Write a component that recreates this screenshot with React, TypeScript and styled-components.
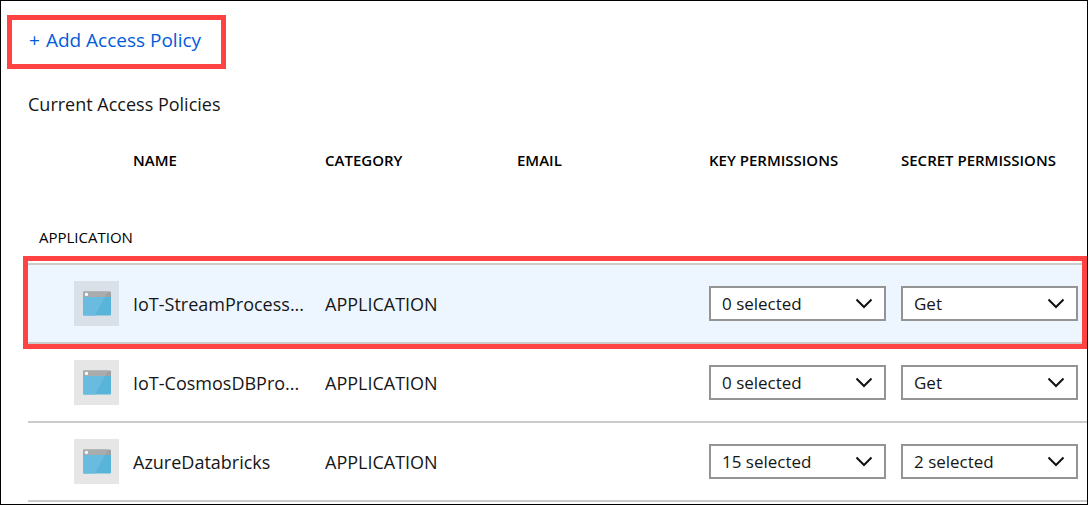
import React from "react";
import styled, { createGlobalStyle } from "styled-components";

const GlobalStyle = createGlobalStyle`
  * { box-sizing: border-box; }
  body {
    margin: 0;
    background: #fff;
    color: #161616;
    font-family: "Open Sans", "Noto Sans", "Liberation Sans", sans-serif;
  }
`;

const Page = styled.main`
  min-height: 100vh;
  border: 1px solid #000;
  padding-top: 14px;
  overflow: hidden;
`;

const Callout = styled.div`
  width: fit-content;
  margin-left: 6px;
  border: 5px solid #ff4343;
  padding: 8px 20px 12px 17px;
`;

const AddButton = styled.button`
  display: flex;
  gap: 6px;
  border: 0;
  padding: 0;
  background: none;
  color: #015cda;
  font: inherit;
  font-size: 19px;
  line-height: 24px;
  cursor: pointer;
`;

const Section = styled.section`
  margin-left: 27px;
`;

const Title = styled.h2`
  margin: 22px 0 0;
  font-size: 18px;
  font-weight: 400;
  line-height: 26px;
`;

const Table = styled.table`
  width: 100%;
  table-layout: fixed;
  border-collapse: separate;
  border-spacing: 0;
`;

const IconCol = styled.col`
  width: 105px;
`;

const LastCol = styled.col`
  width: 186px;
`;

const HeadCell = styled.th`
  height: 86px;
  padding: 0;
  text-align: left;
  white-space: nowrap;
  font-size: 15px;
  font-weight: 600;
  line-height: 20px;
  color: #000;
`;

const GroupCell = styled.th`
  height: 60px;
  padding: 8px 0 0 11px;
  text-align: left;
  font-size: 15px;
  font-weight: 400;
  line-height: 20px;
  color: #000;
`;

const Cell = styled.td`
  height: 79px;
  padding: 0;
  border-top: 2px solid #cbcbcb;
  vertical-align: middle;
`;

const Row = styled.tr<{ $active?: boolean }>`
  position: relative;
  background: ${(p) => (p.$active ? "#edf6ff" : "#fff")};
`;

const RowFrame = styled.span`
  position: absolute;
  inset: -7px 0 -7px -5px;
  border: 5px solid #ff4343;
  pointer-events: none;
  z-index: 1;
`;

const EndLine = styled.td`
  height: 2px;
  padding: 0;
  background: #cbcbcb;
`;

const Tile = styled.div<{ $active?: boolean }>`
  display: flex;
  align-items: center;
  justify-content: center;
  width: 45px;
  height: 45px;
  margin-left: 46px;
  background: ${(p) => (p.$active ? "#d9e0e7" : "#e6e6e6")};
`;

const Label = styled.div`
  padding-right: 16px;
  overflow: hidden;
  white-space: nowrap;
  font-size: 18px;
  line-height: 28px;
`;

const Picker = styled.div`
  position: relative;
  max-width: 177px;
  margin-right: 8px;
`;

const Select = styled.select`
  appearance: none;
  display: block;
  width: 100%;
  height: 35px;
  border: 2px solid #949494;
  border-radius: 0;
  padding: 0 36px 0 11px;
  background: #fff;
  color: #161616;
  font: inherit;
  font-size: 17px;
  line-height: 24px;
`;

const Chevron = styled.svg`
  position: absolute;
  top: 12px;
  right: 13px;
  pointer-events: none;
`;

const AppIcon = () => (
  <svg width="28" height="25" viewBox="0 0 28 25" aria-hidden="true">
    <path d="M0 6h28v17.500a1 1 0 0 1-1 1H1a1 1 0 0 1-1-1z" fill="#59b4d9" />
    <path d="M0 6h22L12 24.500H1a1 1 0 0 1-1-1z" fill="#69bbdf" />
    <path d="M1 .500h26a1 1 0 0 1 1 1V6H0V1.500a1 1 0 0 1 1-1z" fill="#a0a1a2" />
    <path d="M1 .500h24L22 6H0V1.500a1 1 0 0 1 1-1z" fill="#aaabac" />
    <circle cx="3.500" cy="3.400" r="1.600" fill="#fff" />
  </svg>
);

interface DropdownProps {
  label: string;
  value: string;
}

const Dropdown = ({ label, value }: DropdownProps) => (
  <Picker>
    <Select aria-label={label} defaultValue={value}>
      <option>{value}</option>
    </Select>
    <Chevron width="18" height="12" viewBox="0 0 18 12" aria-hidden="true">
      <path d="M1.500 1.500 9 9l7.500-7.500" fill="none" stroke="#111" strokeWidth="2" />
    </Chevron>
  </Picker>
);

const policies = [
  { name: "IoT-StreamProcess...", category: "APPLICATION", keys: "0 selected", secrets: "Get", active: true },
  { name: "IoT-CosmosDBPro...", category: "APPLICATION", keys: "0 selected", secrets: "Get", active: false },
  { name: "AzureDatabricks", category: "APPLICATION", keys: "15 selected", secrets: "2 selected", active: false },
];

export default function App() {
  return (
    <Page>
      <GlobalStyle />
      <Callout>
        <AddButton type="button">
          <span>+</span>
          <span>Add Access Policy</span>
        </AddButton>
      </Callout>
      <Section>
        <Title>Current Access Policies</Title>
        <Table>
          <colgroup>
            <IconCol />
            <col />
            <col />
            <col />
            <col />
            <LastCol />
          </colgroup>
          <thead>
            <tr>
              <HeadCell as="td" />
              <HeadCell scope="col">NAME</HeadCell>
              <HeadCell scope="col">CATEGORY</HeadCell>
              <HeadCell scope="col">EMAIL</HeadCell>
              <HeadCell scope="col">KEY PERMISSIONS</HeadCell>
              <HeadCell scope="col">SECRET PERMISSIONS</HeadCell>
            </tr>
          </thead>
          <tbody>
            <tr>
              <GroupCell colSpan={6} scope="rowgroup">APPLICATION</GroupCell>
            </tr>
            {policies.map((p) => (
              <Row key={p.name} $active={p.active}>
                <Cell>
                  {p.active && <RowFrame />}
                  <Tile $active={p.active}>
                    <AppIcon />
                  </Tile>
                </Cell>
                <Cell>
                  <Label>{p.name}</Label>
                </Cell>
                <Cell>
                  <Label>{p.category}</Label>
                </Cell>
                <Cell />
                <Cell>
                  <Dropdown label={`Key permissions for ${p.name}`} value={p.keys} />
                </Cell>
                <Cell>
                  <Dropdown label={`Secret permissions for ${p.name}`} value={p.secrets} />
                </Cell>
              </Row>
            ))}
            <tr>
              <EndLine colSpan={6} />
            </tr>
          </tbody>
        </Table>
      </Section>
    </Page>
  );
}
